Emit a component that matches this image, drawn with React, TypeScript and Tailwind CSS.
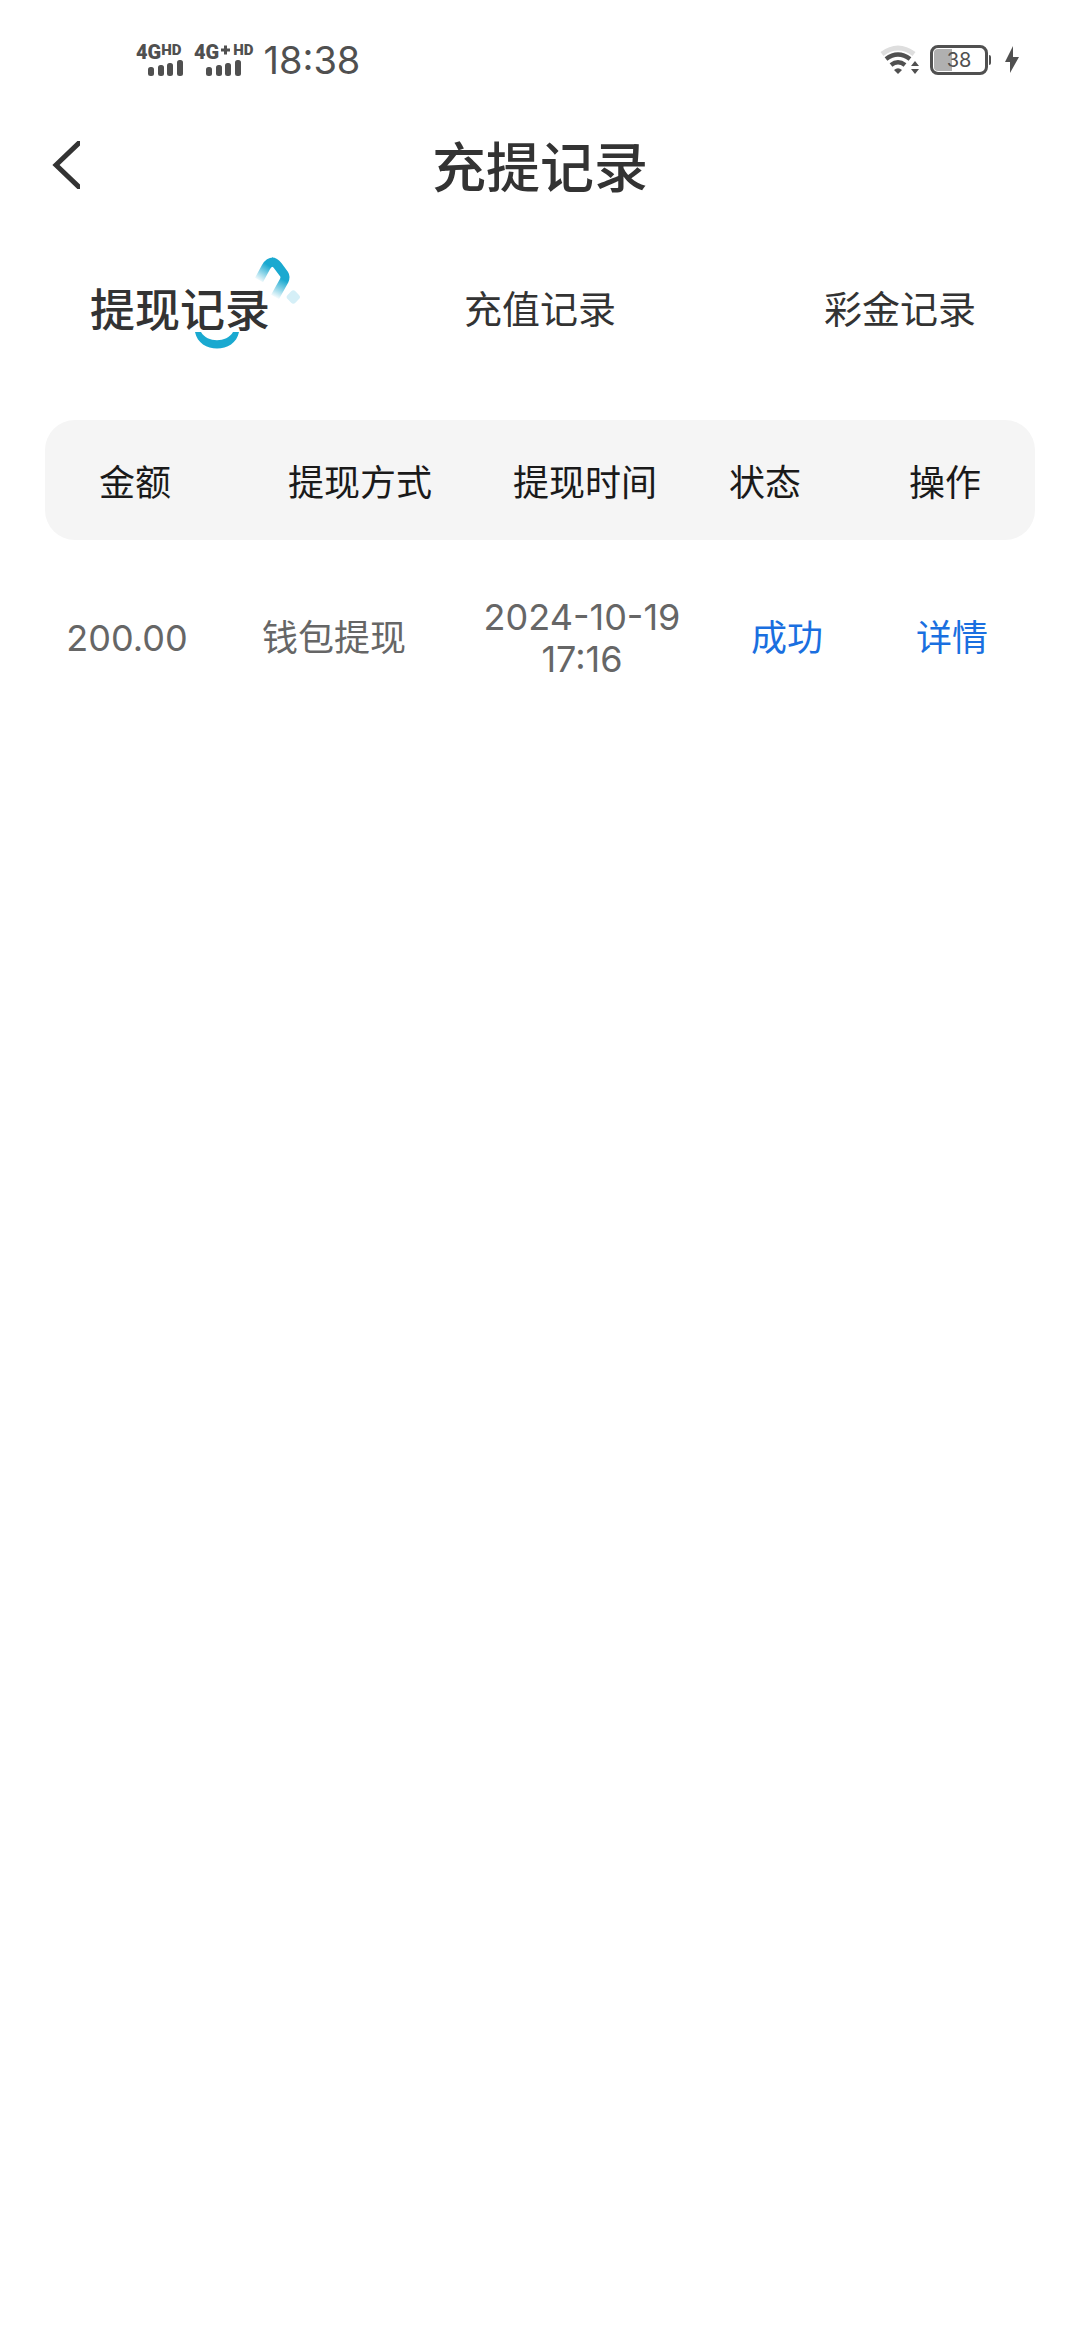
const tabs = ["提现记录", "充值记录", "彩金记录"];

const columns = ["金额", "提现方式", "提现时间", "状态", "操作"];

const records = [
  { amount: "200.00", method: "钱包提现", date: "2024-10-19", time: "17:16", status: "成功" },
];

function Signal({ plus }: { plus?: boolean }) {
  return (
    <div className="flex w-min flex-col font-[Roboto,sans-serif] font-black leading-none">
      <div className="flex h-4 items-start">
        <span className="text-[20px] leading-4">4G</span>
        {plus && (
          <svg className="mx-px h-3 w-3" viewBox="0 0 12 12" fill="none" stroke="currentColor" strokeWidth="3">
            <path d="M1 6h9M5.500 1.500v9" />
          </svg>
        )}
        <span className="text-[15px] leading-3">HD</span>
      </div>
      <svg className="ml-3 h-4 w-9" viewBox="0 0 36 16" fill="currentColor">
        <rect x="0" y="7" width="6" height="9" rx="2.500" />
        <rect x="10" y="5" width="6" height="11" rx="2.500" />
        <rect x="19" y="3" width="6" height="13" rx="2.500" />
        <rect x="29" y="0" width="6" height="16" rx="2.500" />
      </svg>
    </div>
  );
}

function StatusBar() {
  return (
    <div className="flex h-[120px] items-center justify-between pl-[136px] pr-[60px] text-[#505050]">
      <div className="flex items-center gap-[10px]">
        <Signal />
        <Signal plus />
        <span className="font-[Inter,sans-serif] text-[38px] leading-none">18:38</span>
      </div>
      <div className="flex items-center">
        {/* Wifi */}
        <svg className="h-[30px] w-[40px]" viewBox="0 0 40 30" fill="none">
          <path d="M2 9Q18-3 34 9" stroke="#dedede" strokeWidth="5" />
          <path d="M6 14Q18 5 30 14M11 20Q18 14.500 25 20" stroke="#505050" strokeWidth="4.500" />
          <path d="M14 25q4-3.500 8 0l-4 4z" fill="#505050" />
          <path d="M35 16l4 5h-8zM35 29l4-5h-8z" fill="#505050" />
        </svg>
        {/* Battery */}
        <div className="ml-[10px] flex items-center">
          <div className="relative flex h-[30px] w-[58px] items-center justify-center rounded-lg border-[3px] border-[#505050]">
            <div className="absolute inset-y-px left-px w-[18px] rounded-l bg-[#b0b0b0]"></div>
            <span className="relative font-[Inter,sans-serif] text-[20px] leading-none">38</span>
          </div>
          <div className="ml-px h-[10px] w-[2px] rounded-r bg-[#505050]"></div>
        </div>
        <svg className="ml-[13px] h-7 w-4" viewBox="0 0 16 28" fill="currentColor">
          <path d="M9 0L1 16h5L6 27l9-16H9z" />
        </svg>
      </div>
    </div>
  );
}

function TabDecoration() {
  return (
    <>
      <svg className="absolute -top-[31px] left-[165px] h-[52px] w-[48px]" viewBox="0 0 48 52" fill="none">
        <defs>
          <linearGradient id="roofLeft" x1="3" y1="27" x2="13" y2="11" gradientUnits="userSpaceOnUse">
            <stop stopColor="#1aa9d0" stopOpacity="0" />
            <stop offset="1" stopColor="#1aa9d0" />
          </linearGradient>
          <linearGradient id="roofRight" x1="29" y1="26" x2="20" y2="44" gradientUnits="userSpaceOnUse">
            <stop stopColor="#1aa9d0" />
            <stop offset="1" stopColor="#1aa9d0" stopOpacity="0" />
          </linearGradient>
        </defs>
        <path d="M4 26L11 13Q14 8 18 8" stroke="url(#roofLeft)" strokeWidth="9" />
        <path d="M17 8Q20 8 23 12L29 20Q31 23 29 27L20 43" stroke="url(#roofRight)" strokeWidth="9" />
        <rect x="33" y="38" width="11" height="11" rx="3" fill="#d5eff7" transform="rotate(45 39 43)" />
      </svg>
      <svg className="absolute left-[105px] top-[47px] h-[18px] w-[44px]" viewBox="0 0 44 18" fill="#1aa9d0">
        <path d="M0 0H6C12 11 32 11 38 0H44C40 22 4 22 0 0z" />
      </svg>
    </>
  );
}

export default function App() {
  return (
    <div className="min-h-screen bg-white font-['Noto_Sans_CJK_SC',sans-serif] text-[#333333]">
      <StatusBar />

      {/* Title */}
      <header className="grid h-[90px] grid-cols-[1fr_auto_1fr] items-center px-[52px]">
        <button type="button" aria-label="返回" className="justify-self-start">
          <svg className="h-12 w-7" viewBox="0 0 28 48" fill="none" stroke="currentColor" strokeWidth="5">
            <path d="M29 0L4 24l25 24" />
          </svg>
        </button>
        <h1 className="text-[54px] font-medium leading-none">充提记录</h1>
      </header>

      {/* Tabs */}
      <nav className="grid h-[194px] grid-cols-3 items-center justify-items-center">
        {tabs.map((tab, i) =>
          i === 0 ? (
            <button key={tab} type="button" className="relative text-[45px] font-medium leading-none">
              <TabDecoration />
              <span className="relative">{tab}</span>
            </button>
          ) : (
            <button key={tab} type="button" className="text-[38px] leading-none">
              {tab}
            </button>
          )
        )}
      </nav>

      {/* Records */}
      <main className="px-[45px] pt-4">
        <table className="block w-full text-center text-[36px] leading-[42px]">
          <thead className="block">
            <tr className="grid h-[120px] grid-cols-[2fr_3fr_2fr_2fr_2fr] items-center rounded-[30px] bg-[#f5f5f5] text-[#1a1a1a]">
              {columns.map((column) => (
                <th key={column} className="whitespace-nowrap font-normal">{column}</th>
              ))}
            </tr>
          </thead>
          <tbody className="block font-[Inter,'Noto_Sans_CJK_SC',sans-serif] text-[#666666]">
            {records.map((record) => (
              <tr key={record.date + record.time} className="grid grid-cols-[164fr_250fr_246fr_164fr_166fr] items-center py-14">
                <td>{record.amount}</td>
                <td>{record.method}</td>
                <td>
                  {record.date}
                  <br />
                  {record.time}
                </td>
                <td className="text-[#1a6fe0]">{record.status}</td>
                <td>
                  <a href="#" className="text-[#1a6fe0]">详情</a>
                </td>
              </tr>
            ))}
          </tbody>
        </table>
      </main>
    </div>
  );
}
